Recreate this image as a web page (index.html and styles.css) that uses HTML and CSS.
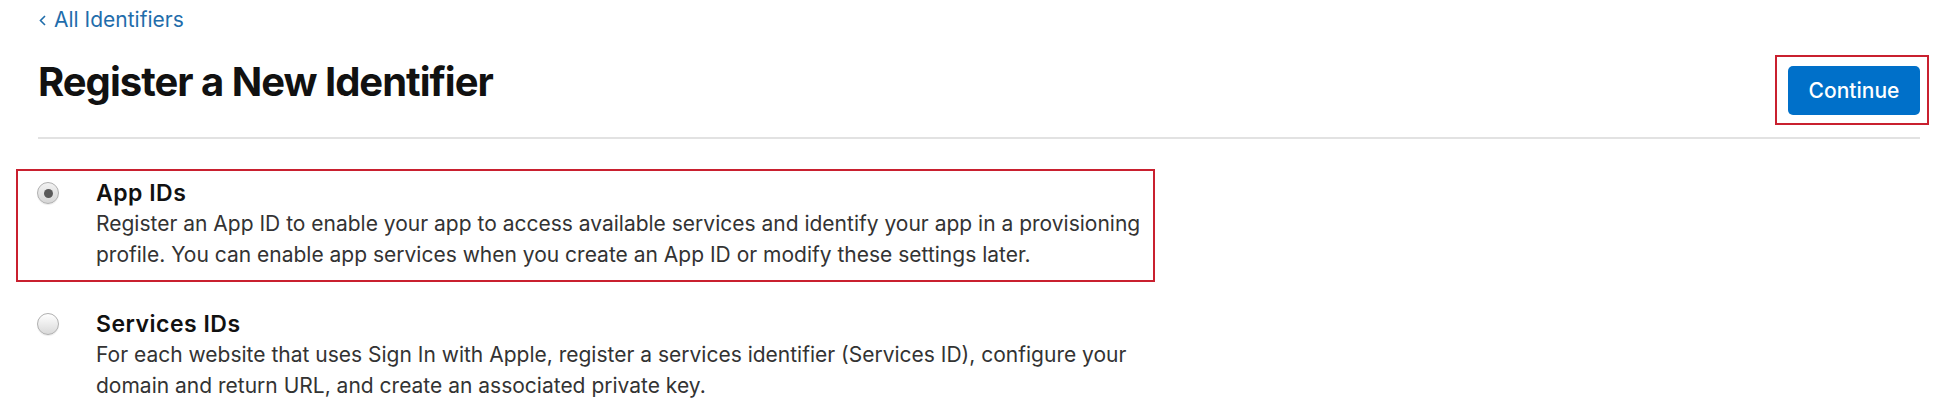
FILE: index.html
```html
<!DOCTYPE html>
<html lang="en">
<head>
<meta charset="utf-8">
<title>Register a New Identifier</title>
<link rel="stylesheet" href="styles.css">
</head>
<body>
<div class="page">
  <a class="back" href="#"><svg class="chev" viewBox="0 0 7 11" width="7" height="11"><path d="M6 1 L1.5 5.5 L6 10" fill="none" stroke="currentColor" stroke-width="1.6"/></svg>All Identifiers</a>
  <div class="header">
    <h1 class="title">Register a New Identifier</h1>
    <span class="mark mark-btn"><button class="btn" type="button">Continue</button></span>
  </div>
  <div class="options">
    <label class="option mark">
      <span class="radio checked"><span class="dot"></span></span>
      <span class="text">
        <span class="opt-title">App IDs</span>
        <span class="opt-desc">Register an App ID to enable your app to access available services and identify your app in a provisioning profile. You can enable app services when you create an App ID or modify these settings later.</span>
      </span>
    </label>
    <label class="option">
      <span class="radio"></span>
      <span class="text">
        <span class="opt-title">Services IDs</span>
        <span class="opt-desc">For each website that uses Sign In with Apple, register a services identifier (Services ID), configure your domain and return URL, and create an associated private key.</span>
      </span>
    </label>
  </div>
</div>
</body>
</html>
```
FILE: styles.css
```css
html, body {
  margin: 0;
  padding: 0;
  background: #ffffff;
}
body {
  font-family: Inter, "Noto Sans", "Liberation Sans", sans-serif;
  color: #1d1d1f;
}
.page {
  padding: 4px 24px 0 0;
}
.back {
  display: inline-flex;
  align-items: center;
  margin-left: 39px;
  font-size: 21px;
  line-height: 31px;
  color: #1f6dab;
  text-decoration: none;
}
.chev {
  margin-right: 8px;
  margin-top: 2px;
}
.header {
  display: flex;
  justify-content: space-between;
  align-items: flex-start;
  margin-left: 38px;
  padding-top: 20px;
  padding-bottom: 12px;
  border-bottom: 2px solid #e2e2e2;
}
.title {
  margin: 2px 0 0 0;
  font-size: 40px;
  line-height: 50px;
  font-weight: 700;
  letter-spacing: -1px;
  color: #111111;
}
.mark {
  border: 2px solid #c9202f;
}
.mark-btn {
  display: block;
  padding: 9px 7px 8px 11px;
  margin-right: -9px;
}
.btn {
  display: block;
  height: 49px;
  width: 132px;
  padding: 0;
  border: none;
  border-radius: 5px;
  background: #0070c9;
  color: #ffffff;
  font-family: inherit;
  font-size: 21px;
  font-weight: 500;
}
.options {
  margin-top: 30px;
  margin-left: 16px;
  display: flex;
  flex-direction: column;
  gap: 18px;
  align-items: flex-start;
}
.option {
  display: flex;
  align-items: flex-start;
  padding: 7px 2px 10px 19px;
  border: 2px solid transparent;
}
.option.mark {
  border-color: #c9202f;
}
.radio {
  flex: none;
  width: 20px;
  height: 20px;
  margin-top: 4px;
  margin-right: 37px;
  border-radius: 50%;
  border: 1px solid #b0b0b0;
  background: linear-gradient(#ffffff, #d9d9d9);
  box-shadow: 0 1px 1px rgba(0, 0, 0, 0.08);
  display: flex;
  align-items: center;
  justify-content: center;
}
.radio.checked {
  background: linear-gradient(#f2f2f2, #d6d6d6);
}
.dot {
  width: 9px;
  height: 9px;
  border-radius: 50%;
  background: #595959;
}
.text {
  display: flex;
  flex-direction: column;
  width: 1055px;
}
.opt-title {
  font-size: 23px;
  line-height: 30px;
  font-weight: 600;
  letter-spacing: 0.5px;
  color: #111111;
}
.opt-desc {
  font-size: 21px;
  line-height: 31px;
  color: #333333;
}
```
